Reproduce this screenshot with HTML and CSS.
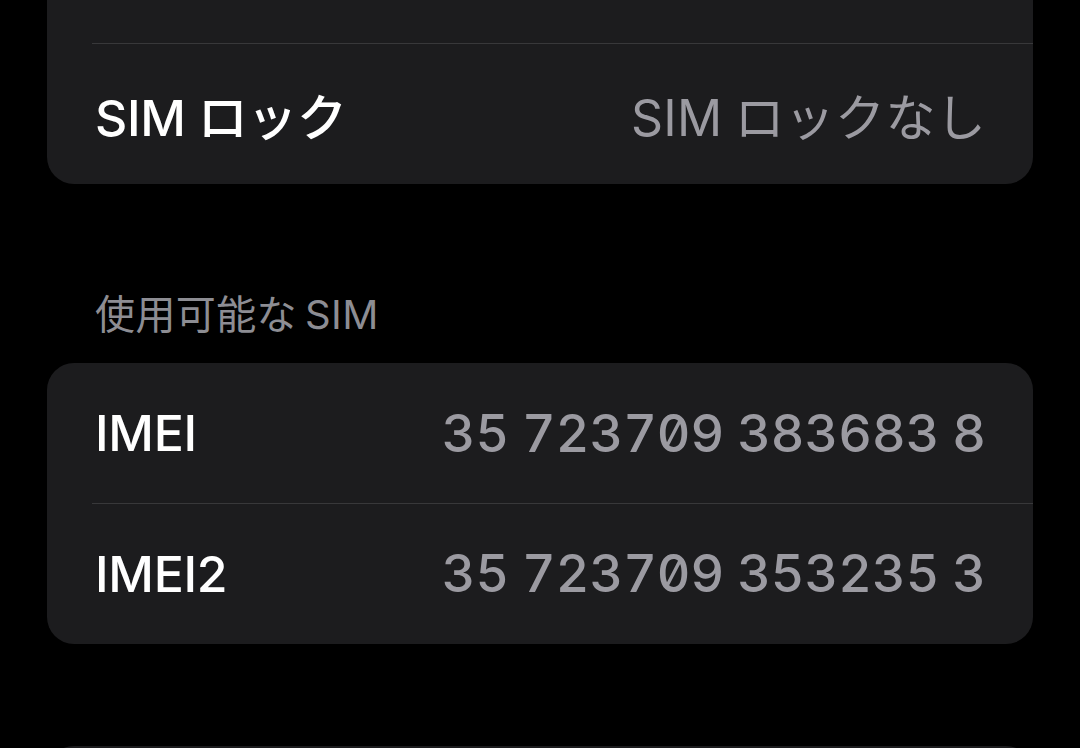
FILE: index.html
```html
<!DOCTYPE html>
<html lang="ja">
<head>
<meta charset="UTF-8" />
<title>情報</title>
<meta name="viewport" content="width=device-width, initial-scale=1" />
<link rel="stylesheet" href="styles.css">
</head>
<body>

<div class="screen">
  <!-- ---------- carrier ---------- -->
  <div class="group">
    <div class="row"></div>
    <div class="row">
      <span class="label"><span class="latin">SIM</span>ロック</span>
      <span class="value"><span class="latin">SIM</span>ロックなし</span>
    </div>
  </div>

  <!-- ---------- available SIM ---------- -->
  <div class="section-title">使用可能な<span class="latin-before">SIM</span></div>
  <div class="group">
    <div class="row">
      <span class="label">IMEI</span>
      <span class="value mono">35 723709 383683 8</span>
    </div>
    <div class="row">
      <span class="label">IMEI2</span>
      <span class="value mono">35 723709 353235 3</span>
    </div>
  </div>

  <div class="group next"></div>
</div>

</body>
</html>
```

FILE: styles.css
```css
/* ---- page ---- */
html,body{background:#000;margin:0;padding:0;overflow:hidden}
body{font-family:Inter,"Noto Sans CJK JP",sans-serif;color:#fff;-webkit-font-smoothing:antialiased}
.screen{margin-top:-97px}

/* ---- grouped list ---- */
.group{background:#1c1c1e;margin:0 47px;border-radius:27px;overflow:hidden}
.group.next{margin-top:102px;height:120px}
.row{display:flex;align-items:center;justify-content:space-between;height:140px;padding:0 47px 0 48px;position:relative}
.row + .row{height:141px}
.row + .row::before{content:"";position:absolute;left:45px;right:0;top:0;height:1px;background:#38383a}
.label{font-size:50px;font-weight:500;letter-spacing:-.3px}
.value{font-size:50px;color:#9b9aa1;font-weight:400;letter-spacing:.3px}
.latin{margin-right:12px}
.value.mono{font-size:52px;font-weight:500;letter-spacing:0;word-spacing:-1px;font-variant-numeric:tabular-nums slashed-zero}

/* ---- section header ---- */
.section-title{margin:106px 0 23px;padding:0 95px;height:50px;line-height:50px;font-size:40px;color:#8d8d93;letter-spacing:.4px}
.latin-before{margin-left:8px}
```
